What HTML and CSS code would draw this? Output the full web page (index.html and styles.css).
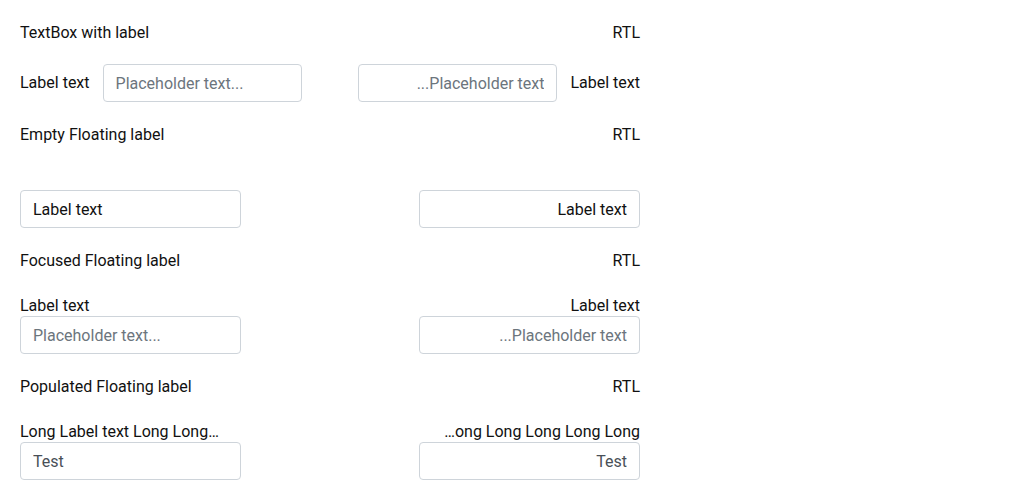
FILE: index.html
```html
<!DOCTYPE html>
<html lang="en">
<head>
<meta charset="utf-8">
<title>TextBox</title>
<link rel="stylesheet" href="styles.css">
</head>
<body>
<main class="page">
  <div class="pair">
    <div class="title">TextBox with label</div>
    <div class="title">RTL</div>
  </div>
  <div class="pair">
    <div class="inline-field">
      <label class="inline-label">Label text</label>
      <input class="box inline-box" type="text" placeholder="Placeholder text...">
    </div>
    <div class="inline-field" dir="rtl">
      <label class="inline-label">Label text</label>
      <input class="box inline-box" type="text" placeholder="Placeholder text...">
    </div>
  </div>

  <div class="pair">
    <div class="title">Empty Floating label</div>
    <div class="title">RTL</div>
  </div>
  <div class="pair">
    <div class="float-field">
      <div class="float-label"></div>
      <div class="box float-box inner-label">Label text</div>
    </div>
    <div class="float-field" dir="rtl">
      <div class="float-label"></div>
      <div class="box float-box inner-label">Label text</div>
    </div>
  </div>

  <div class="pair">
    <div class="title">Focused Floating label</div>
    <div class="title">RTL</div>
  </div>
  <div class="pair">
    <div class="float-field">
      <label class="float-label">Label text</label>
      <input class="box float-box" type="text" placeholder="Placeholder text...">
    </div>
    <div class="float-field" dir="rtl">
      <label class="float-label">Label text</label>
      <input class="box float-box" type="text" placeholder="Placeholder text...">
    </div>
  </div>

  <div class="pair">
    <div class="title">Populated Floating label</div>
    <div class="title">RTL</div>
  </div>
  <div class="pair">
    <div class="float-field">
      <label class="float-label">Long Label text Long Long Long Long Long Long</label>
      <input class="box float-box" type="text" value="Test">
    </div>
    <div class="float-field" dir="rtl">
      <label class="float-label">Long Label text Long Long Long Long Long Long</label>
      <input class="box float-box" type="text" value="Test">
    </div>
  </div>
</main>
</body>
</html>
```

FILE: styles.css
```css
html, body {
  margin: 0;
  padding: 0;
  background: #ffffff;
}

body {
  font-family: Roboto, "Liberation Sans", sans-serif;
  font-size: 16px;
  line-height: 24px;
  color: #111111;
}

.page {
  width: 620px;
  padding: 20px 0 0 20px;
  display: flex;
  flex-direction: column;
  gap: 20px;
}

.pair {
  display: flex;
  justify-content: space-between;
  align-items: flex-end;
}

.title {
  box-sizing: border-box;
  height: 24px;
  padding-top: 2px;
  line-height: 22px;
}

.inline-field {
  display: flex;
  align-items: center;
  gap: 13px;
}

.inline-label {
  white-space: nowrap;
}

.box {
  box-sizing: border-box;
  height: 38px;
  border: 1px solid #ced4da;
  border-radius: 4px;
  padding: 0 12px;
  font-family: Roboto, "Liberation Sans", sans-serif;
  font-size: 16px;
  color: #495057;
  background: #ffffff;
  outline: none;
  margin: 0;
}

.box::placeholder {
  color: #6c757d;
  opacity: 1;
}

.inline-box {
  width: 199px;
}

.float-field {
  display: flex;
  flex-direction: column;
  width: 221px;
}

.float-label {
  box-sizing: border-box;
  width: 200px;
  height: 24px;
  padding-top: 4px;
  line-height: 20px;
  white-space: nowrap;
  overflow: hidden;
  text-overflow: ellipsis;
}

.float-box {
  width: 221px;
}

.inner-label {
  display: flex;
  align-items: center;
  padding-top: 2px;
  color: #111111;
}
```
